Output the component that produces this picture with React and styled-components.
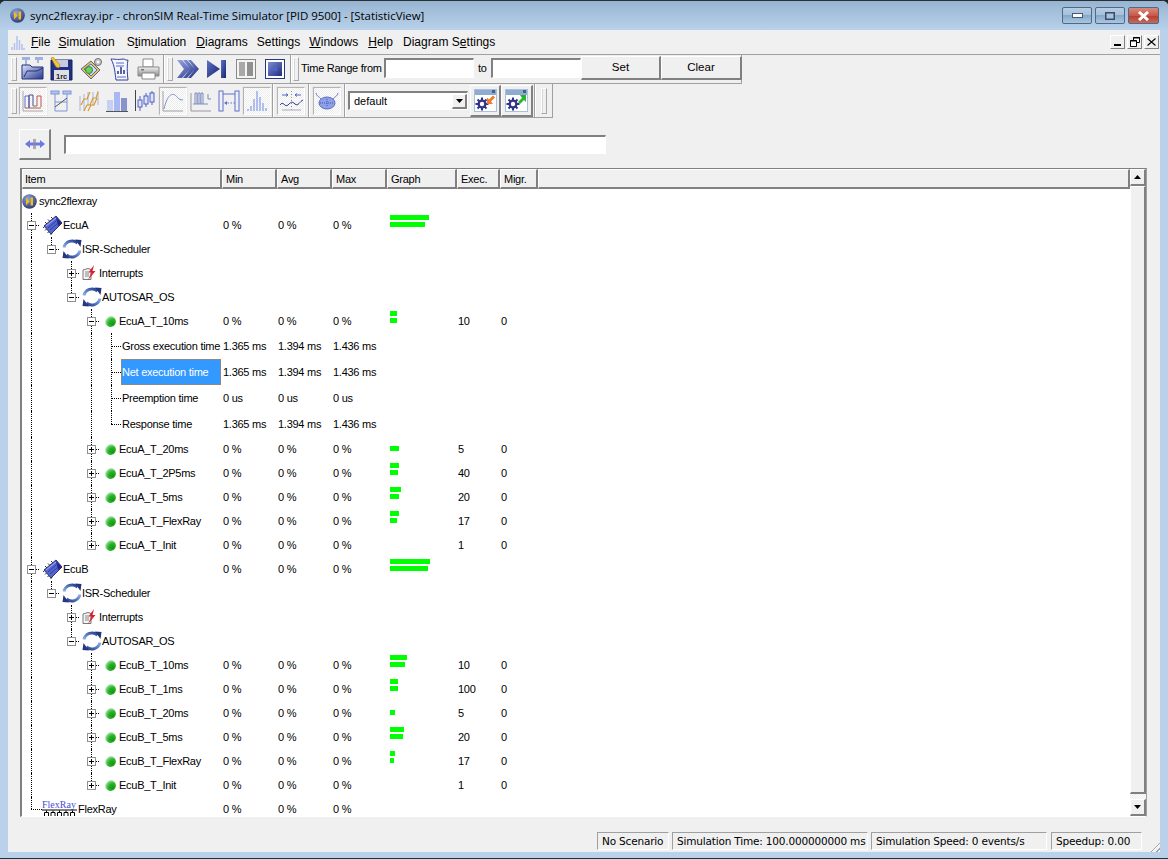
import React from 'react';
import styled, { createGlobalStyle, css } from 'styled-components';

const Global = createGlobalStyle`
  html, body { margin: 0; padding: 0; background: #20262b; overflow: hidden; }
  #root { width: 1168px; height: 859px; }
  * { box-sizing: border-box; }
`;

const UI = `"Liberation Sans", Arial, sans-serif`;
const raised = css`
  border-style: solid; border-width: 1px 2px 2px 1px;
  border-color: #fff #808080 #808080 #fff;
  background: #f0f0f0;
`;
const sunken = css`
  border-style: solid; border-width: 2px 1px 1px 2px;
  border-color: #808080 #fff #fff #808080;
  background: #fff;
`;
const dither = `repeating-conic-gradient(#fff 0 25%, #ececec 0 50%) 0 0/2px 2px`;

const Win = styled.div`
  width: 1168px; height: 859px; display: flex; flex-direction: column; overflow: hidden;
  background: #b9d1ea; border-top: 1px solid #2b2f33; border-bottom: 1px solid #0d3b44;
  border-radius: 6px 6px 0 0;
  font: 11px ${UI}; letter-spacing: -0.26px; color: #000;
`;
const TitleBar = styled.div`
  height: 29px; flex: none; display: flex; align-items: center; padding: 0 9px 0 10px;
  background: linear-gradient(#96b5d2, #b9d1ea);
`;
const TitleText = styled.div`
  margin-left: 5px; flex: 1; font: 11.5px "Open Sans", sans-serif; letter-spacing: -0.05px; color: #000; white-space: nowrap;
`;
const CapBtns = styled.div`display: flex; gap: 3px;`;
const CapBtn = styled.div`
  width: ${p => p.$w}px; height: 17px; border: 1px solid #4f6a87; border-radius: 2px;
  display: flex; align-items: center; justify-content: center;
  background: ${p => p.$close ? 'linear-gradient(#d98a7f 0,#c9584a 50%,#b73c2e 51%,#c46a5c 100%)' : 'linear-gradient(#b7cde2 0,#a5c0da 48%,#86a9ca 50%,#aac6e0 100%)'};
`;
const Client = styled.div`
  flex: 1; margin: 0 8px 6px 8px; background: #f0f0f0; display: flex; flex-direction: column; min-height: 0;
`;
const MenuBar = styled.div`
  height: 25px; flex: none; display: flex; align-items: center; border-bottom: 1px solid #a0a0a0; padding-left: 3px; padding-right: 1px;
`;
const MenuItems = styled.div`display: flex; flex: 1; margin-left: 6px;`;
const MenuItem = styled.span`margin-left: ${p => p.$ml}px; font-size: 12px; letter-spacing: 0.02px; white-space: nowrap;`;
const MdiBtns = styled.div`display: flex; gap: 2px;`;
const MdiBtn = styled.div`
  ${raised}; border-width: 1px; width: ${p => p.$w || 15}px; height: 14px; display: flex; align-items: center; justify-content: center;
`;
const Toolbar = styled.div`
  width: ${p => p.$w}px; height: ${p => p.$h}px; flex: none; display: flex; align-items: center;
  padding-left: 3px; border-bottom: 1px solid #a0a0a0; border-right: 1px solid #a0a0a0;
`;
const Gripper = styled.div`
  width: 6px; height: ${p => p.$h || 24}px; flex: none; margin-left: ${p => p.$ml || 0}px;
  border: 1px solid #a8a8a8; border-top-color: #fff; border-left-color: #fff; background: #f0f0f0;
  box-shadow: inset 1px 0 0 #d8d8d8;
`;
const Divider = styled.div`
  width: 2px; align-self: stretch; flex: none; margin-left: ${p => p.$ml || 0}px;
  border-left: 1px solid #a0a0a0; border-right: 1px solid #fff;
`;
const ToolBtn = styled.div`
  width: ${p => p.$w || 29}px; height: ${p => p.$bh || 24}px; flex: none; display: flex; align-items: center; justify-content: center;
  margin-left: ${p => p.$ml || 0}px;
  ${p => p.$pressed && css`
    background: ${dither}; border: 1px solid; border-color: #b4b4b4 #fff #fff #b4b4b4; outline: 1px solid #e8e8e8;
  `}
  ${p => p.$raised && css`${raised}`}
`;
const RangeLabel = styled.span`
  width: ${p => p.$w}px; margin: 0 0 3px ${p => p.$ml}px; flex: none; font-size: 11px; white-space: nowrap;
`;
const Field = styled.div`
  ${sunken}; width: ${p => p.$w}px; height: ${p => p.$h || 20}px; margin-left: ${p => p.$ml || 0}px; flex: none;
  ${p => p.$lift && `margin-bottom: ${p.$lift}px;`}
  ${p => p.$top && `margin-top: ${p.$top}px;`}
`;
const PushBtn = styled.div`
  ${raised}; width: ${p => p.$w}px; height: 24px; flex: none; margin: 0 0 3px ${p => p.$ml || 0}px;
  display: flex; align-items: center; justify-content: center; font-size: 11.5px; letter-spacing: 0;
`;
const Combo = styled.div`
  ${sunken}; width: 120px; height: 19px; flex: none; margin-left: 2px; display: flex; align-items: center; padding-left: 4px; justify-content: space-between; font-size: 11px; letter-spacing: 0;
`;
const ComboArrow = styled.div`
  ${raised}; width: 15px; height: 15px; display: flex; align-items: center; justify-content: center;
`;
const Quick = styled.div`
  height: 50px; flex: none; display: flex; align-items: flex-start; padding: 11px 0 0 11px;
`;
const QuickBtn = styled.div`
  ${raised}; width: 32px; height: 31px; flex: none; display: flex; align-items: center; justify-content: center;
`;
const TableFrame = styled.div`
  height: 649px; flex: none; margin: 0 13px 0 12px; display: flex;
  border-style: solid; border-width: 1px 1px 1px 2px; border-color: #808080 #a0a0a0 #fff #808080;
`;
const TableMain = styled.div`flex: 1; min-width: 0; display: flex; flex-direction: column; overflow: hidden; background: #fff;`;
const COLS = `198px 55px 55px 55px 70px 43px 40px 1fr`;
const HEAD_COLS = `200px 55px 55px 55px 70px 43px 38px 1fr`;
const HeaderRow = styled.div`display: grid; grid-template-columns: ${HEAD_COLS}; height: 20px; flex: none;`;
const HeadCell = styled.div`
  padding: 0 0 0 ${p => p.$pad}px; display: flex; align-items: center; font-size: 11px;
  background: #f0f0f0; border-style: solid; border-width: 1px 2px 2px 1px; border-color: #fff #808080 #808080 #fff;
`;
const Body = styled.div`flex: 1; overflow: hidden; min-height: 0;`;
const Row = styled.div`display: grid; grid-template-columns: ${COLS}; height: ${p => p.$h}px;`;
const ItemCell = styled.div`
  position: relative; display: flex; align-items: center; height: 100%; white-space: nowrap;
  padding-left: ${p => p.$pad}px;
`;
const VLine = styled.div`
  position: absolute; left: ${p => p.$x}px; top: 0; width: 1px;
  height: ${p => p.$half ? '50%' : '100%'};
  border-left: 1px dotted #000;
`;
const Expander = styled.div`
  position: relative; width: 9px; height: 9px; flex: none; background: #fff; border: 1px solid #909090;
  &::before { content: ''; position: absolute; left: 1px; right: 1px; top: 3px; height: 1px; background: #000; }
  ${p => p.$plus && css`&::after { content: ''; position: absolute; top: 1px; bottom: 1px; left: 3px; width: 1px; background: #000; }`}
`;
const HDash = styled.div`
  width: ${p => p.$w}px; height: 1px; flex: none; border-top: 1px dotted #000; margin-right: ${p => p.$mr || 0}px; position: relative;
`;
const NodeIcon = styled.div`
  position: relative; flex: none; display: flex; width: ${p => p.$w}px; margin-right: ${p => p.$mr || 0}px;
`;
const Label = styled.span`
  position: relative; font-size: 11px;
  ${p => p.$fill && css`
    flex: 1; height: 100%; display: flex; align-items: center; padding-left: 1px; margin-right: -1px;
  `}
  ${p => p.$sel && css`
    background: #3399ff; color: #fff; outline: 1px dotted #d97a1a; outline-offset: -1px;
  `}
`;
const ValCell = styled.div`display: flex; align-items: center; padding-left: 3px; font-size: 11px; white-space: nowrap;`;
const GraphCell = styled.div`display: flex; flex-direction: column; gap: 2px; padding: ${p => p.$single ? 9 : 2}px 0 0 5px;`;
const Bar = styled.div`width: ${p => p.$w}px; height: 5px; background: #00ff00;`;
const ScrollTrack = styled.div`
  width: 16px; flex: none; display: flex; flex-direction: column; background: ${dither};
`;
const ScrollBtn = styled.div`
  ${raised}; height: 17px; flex: none; display: flex; align-items: center; justify-content: center;
`;
const ScrollThumb = styled.div`${raised}; height: 608px; flex: none;`;
const ScrollRest = styled.div`flex: 1;`;
const StatusBar = styled.div`
  flex: 1; display: flex; align-items: flex-end; padding: 0 18px 2px 589px; gap: 3px; position: relative;
`;
const StatusBox = styled.div`
  width: ${p => p.$w}px; height: 18px; flex: none; margin-left: ${p => p.$ml || 0}px;
  border: 1px solid; border-color: #a0a0a0 #fff #fff #a0a0a0; display: flex; align-items: center; padding-left: 4px;
  font: 10.5px "DejaVu Sans", sans-serif; letter-spacing: -0.18px; white-space: nowrap;
`;
const Grip = styled.div`
  position: absolute; right: 0; bottom: 0; width: 12px; height: 12px;
  background: repeating-linear-gradient(135deg, transparent 0 2px, #a0a0a0 2px 3px, #fff 3px 4px);
  clip-path: polygon(100% 0, 100% 100%, 0 100%);
`;

const Svg = ({ w = 24, h = 24, vb, children }) => (
  <svg width={w} height={h} viewBox={vb || `0 0 ${w} ${h}`} style={{ display: 'block' }}>{children}</svg>
);

/* ---------- logos & tree icons ---------- */
const Logo = ({ id, s = 15 }) => (
  <Svg w={s} h={s} vb="0 0 15 15">
    <defs><radialGradient id={id} cx="40%" cy="30%" r="75%"><stop offset="0" stopColor="#8ea6d8"/><stop offset="1" stopColor="#27366f"/></radialGradient></defs>
    <circle cx="7.5" cy="7.5" r="7.3" fill={`url(#${id})`}/>
    <path d="M4 3.5l3.6 4L4 11.5z" fill="#f5b81f"/>
    <rect x="8.6" y="3.5" width="2.4" height="8" fill="#f5b81f"/>
  </Svg>
);
const Chip = () => (
  <Svg w={21} h={21}>
    <g stroke="#333" strokeWidth="1">
      <path d="M3 11l-2 2M5 13.500l-2 2M7.500 16l-2 2M10 18.500l-1.500 1.500M5 9L3 7M8 6.500L6 4.500M11 4L9 2"/>
    </g>
    <path d="M2 11L14 1l6 7-11 11z" fill="#5565d0" stroke="#2a3274"/>
    <path d="M4 11L14 3" fill="none" stroke="#a3b0f0"/>
    <path d="M14 2l6 6-4 3z" fill="#1d2a8a"/>
    <path d="M6 13l8-7M8 15l8-7" stroke="#3040a0"/>
  </Svg>
);
const Sync = ({ id }) => (
  <Svg w={20} h={20}>
    <defs>
      <linearGradient id={`${id}a`} x1="0" y1="1" x2="1" y2="0"><stop offset="0" stopColor="#8fb4ee"/><stop offset="1" stopColor="#24408e"/></linearGradient>
      <linearGradient id={`${id}b`} x1="1" y1="0" x2="0" y2="1"><stop offset="0" stopColor="#8fb4ee"/><stop offset="1" stopColor="#24408e"/></linearGradient>
    </defs>
    <path d="M2 8.500A8.300 8.300 0 0 1 15.500 4" fill="none" stroke={`url(#${id}a)`} strokeWidth="3"/>
    <path d="M13 .5l6.500.5-1 7z" fill="#23367f"/>
    <path d="M18 11.500A8.300 8.300 0 0 1 4.500 16" fill="none" stroke={`url(#${id}b)`} strokeWidth="3"/>
    <path d="M7 19.500l-6.500-.5 1-7z" fill="#23367f"/>
  </Svg>
);
const Interrupt = () => (
  <Svg w={14} h={16}>
    <path d="M1 5l5-1.500 3 1v10H1z" fill="#f4f4f4" stroke="#777"/>
    <path d="M3 7h4M3 9h4M3 11h4" stroke="#888"/>
    <path d="M12 0L6.500 7.500h3L6 15l7.500-9h-3z" fill="#d8202a"/>
  </Svg>
);
const Ball = ({ id }) => (
  <Svg w={11} h={11}>
    <defs><radialGradient id={id} cx="70%" cy="70%" r="78%"><stop offset="0" stopColor="#119611"/><stop offset=".5" stopColor="#2cb42c"/><stop offset=".8" stopColor="#7ed67e"/><stop offset="1" stopColor="#f4fff4"/></radialGradient></defs>
    <circle cx="5.500" cy="5.500" r="5.400" fill={`url(#${id})`}/>
  </Svg>
);
const FlexBus = () => (
  <Svg w={35} h={23} vb="0 -2.500 35 23">
    <text x="0" y="7" fontFamily="Liberation Serif, serif" fontSize="10" letterSpacing="0" fill="#4a4ad8">FlexRay</text>
    <path d="M0 9.500h35" stroke="#000"/>
    <path d="M2.500 17v-5h4v5M9 17v-5h4v5M15.500 17v-5h4v5M22 17v-5h4v5M28.500 17v-5h4v5M4.500 10v2M11 10v2M17.500 10v2M24 10v2M30.500 10v2" fill="none" stroke="#000"/>
  </Svg>
);
const Histo = () => (
  <Svg w={14} h={15}>
    <path d="M1 15v-3M3.500 15V8M6 15V1M8.500 15V5M11 15v-6M13 15v-2" stroke="#b4c2ee" strokeWidth="1.500"/>
  </Svg>
);

/* ---------- toolbar icons ---------- */
const IOpen = () => (
  <Svg w={24} h={24}>
    <defs><linearGradient id="ob" x1="0" y1="0" x2="1" y2="1"><stop offset="0" stopColor="#dfe6fa"/><stop offset="1" stopColor="#25358c"/></linearGradient></defs>
    <rect x="1" y="0" width="8" height="3" fill="#9db1e6"/><rect x="14" y="0" width="8" height="3" fill="#9db1e6"/>
    <path d="M5 3v5M17 3v3" stroke="#6678b8"/>
    <path d="M1 22V8h8l2 2h11v12z" fill="url(#ob)" stroke="#22307e"/>
    <path d="M3 20l3-6h10l6-3" fill="none" stroke="#22307e"/>
  </Svg>
);
const ISave = () => (
  <Svg w={23} h={24}>
    <path d="M1 3h21v20H1z" fill="#1f3085" stroke="#16205f"/>
    <rect x="6" y="3" width="12" height="7" fill="#c6cbe0"/>
    <rect x="4" y="13" width="15" height="10" fill="#dfdfe6"/>
    <text x="6" y="21.500" fontFamily="Liberation Sans" fontWeight="700" fontSize="7.500" letterSpacing="0" fill="#222">1rc</text>
    <path d="M1 1l2-1 7 8-1 3-3-1z" fill="#f2c53a" stroke="#a87a12" strokeWidth=".6"/>
  </Svg>
);
const IGear = () => (
  <Svg w={24} h={24}>
    <path d="M2 12L12 4l9 9-9 9z" fill="#e8c44c" stroke="#5a64a8"/>
    <path d="M5 12l7-5 6 6-6 6z" fill="#cfd8f5" stroke="#5668c0"/>
    <circle cx="10" cy="13" r="3.500" fill="#6ed25a" stroke="#3a8a30"/>
    <circle cx="19" cy="5" r="3.500" fill="#c8c8c8" stroke="#707070"/>
    <circle cx="19" cy="5" r="1.200" fill="#fff"/>
  </Svg>
);
const IDoc = () => (
  <Svg w={20} h={23}>
    <path d="M1 1c4 0 6 1 12 0 2 0 4 2 5 1-1 4-1 12 0 20H6c-1-6-1-14-5-21z" fill="#f4f6ff" stroke="#2f3f9c"/>
    <path d="M6 5h8M6 8h8M7 19h9" stroke="#5a6ac4"/>
    <path d="M8 16v-3M11 16V9M14 16v-4" stroke="#24308a" strokeWidth="1.500"/>
  </Svg>
);
const IPrint = () => (
  <Svg w={23} h={22}>
    <defs><linearGradient id="pr" x1="0" y1="0" x2="0" y2="1"><stop offset="0" stopColor="#f2f2f2"/><stop offset="1" stopColor="#8a8a8a"/></linearGradient></defs>
    <path d="M6 1h10v8H6z" fill="#fff" stroke="#888"/>
    <path d="M1 9h21v9H1z" fill="url(#pr)" stroke="#8a8a8a"/>
    <path d="M5 15h13v6H5z" fill="#fff" stroke="#888"/>
    <rect x="4" y="11" width="3" height="1.500" fill="#777"/>
  </Svg>
);
const Grad = ({ id, a = '#9aa8e4', b = '#1f2d80' }) => (
  <defs><linearGradient id={id} x1="0" y1="0" x2="1" y2="1"><stop offset="0" stopColor={a}/><stop offset="1" stopColor={b}/></linearGradient></defs>
);
const IFF = () => (
  <Svg w={22} h={20}>
    <Grad id="ff"/>
    <path d="M0 1h5l8 9-8 9H0l7-9zM6 1h4l8 9-8 9H6l7-9zM11 1h3l8 9-8 9h-3l7-9z" fill="url(#ff)"/>
  </Svg>
);
const IStep = () => (
  <Svg w={20} h={20}>
    <Grad id="st" a="#5f72c8" b="#16226e"/>
    <path d="M0 1l13 9-13 9z" fill="url(#st)"/>
    <rect x="14" y="1" width="5" height="18" fill="url(#st)"/>
  </Svg>
);
const IPause = () => (
  <Svg w={20} h={20}>
    <rect x=".5" y=".5" width="19" height="19" fill="#f4f4f4" stroke="#888"/>
    <rect x="3" y="3" width="6" height="14" fill="#a8a8a8"/>
    <rect x="11" y="3" width="6" height="14" fill="#909090"/>
  </Svg>
);
const IStop = () => (
  <Svg w={20} h={20}>
    <Grad id="sp" a="#7d8dd8" b="#1f2d80"/>
    <rect x=".5" y=".5" width="19" height="19" fill="#fff" stroke="#2a3580"/>
    <rect x="3" y="3" width="14" height="14" fill="url(#sp)"/>
    <rect x="8" y="8" width="4" height="4" fill="#5464b8"/>
  </Svg>
);
const LB = '#7f93d8';
const IPulse = () => (
  <Svg w={22} h={22}>
    <path d="M1 1v20h20" fill="none" stroke="#a8a8a8"/>
    <path d="M3 18V6h4v12" fill="none" stroke="#5a6cc8"/>
    <path d="M7 18V5h4v11" fill="none" stroke="#444a98"/>
    <path d="M11 16h4" stroke="#3a9a3a"/>
    <path d="M15 16V6h4v11" fill="none" stroke="#c05050"/>
    <path d="M3 18h16" stroke="#c05050"/>
  </Svg>
);
const IGantt = () => (
  <Svg w={22} h={22}>
    <rect x="1" y="1" width="8" height="3" fill="#b4c4ee" stroke={LB}/><rect x="13" y="1" width="8" height="3" fill="#b4c4ee" stroke={LB}/>
    <path d="M5 4v17M17 4v17M5 12h12M5 21h12" stroke={LB} fill="none"/>
    <path d="M5 17L17 8" stroke="#555"/>
  </Svg>
);
const IStair = () => (
  <Svg w={21} h={22}>
    <path d="M1 6v15M5 4v17M9 2v14M14 2v14M19 1v14" stroke="#a8b4e0" fill="none"/>
    <path d="M2 15l3-6h3l3-7M5 21l3-6h3l3-7h3l2-6M9 21l3-6h3l3-7" stroke="#d89a2a" fill="none" strokeWidth="1.200"/>
  </Svg>
);
const IBars = () => (
  <Svg w={22} h={22}>
    <rect x="1" y="10" width="6" height="11" fill="#c6d0f2"/>
    <rect x="8" y="2" width="6" height="19" fill="#a8b8f4"/>
    <rect x="15" y="8" width="6" height="13" fill="#8594cc"/>
    <path d="M0 21.500h22" stroke="#555"/>
  </Svg>
);
const IBox = () => (
  <Svg w={21} h={22}>
    <path d="M.5 0v21" stroke="#444"/>
    <path d="M5 6v15M11 3v14M17 1v14" stroke="#5060c0"/>
    <rect x="3" y="10" width="4" height="7" fill="#dde3fa" stroke="#5060c0"/>
    <rect x="9" y="6" width="4" height="8" fill="#dde3fa" stroke="#5060c0"/>
    <rect x="15" y="3" width="4" height="9" fill="#dde3fa" stroke="#5060c0"/>
  </Svg>
);
const ICurve = () => (
  <Svg w={22} h={22}>
    <path d="M1 1v20h20" fill="none" stroke="#a0a0a0"/>
    <path d="M2 19C5 6 9 3 13 5c2 1 3 5 8 5" fill="none" stroke="#7c90cc"/>
  </Svg>
);
const ITiming = () => (
  <Svg w={22} h={22}>
    <path d="M1 3v18h20" fill="none" stroke="#999"/>
    <path d="M5 14V3h2v11M8 14V3h2v11M11 14V3h2v11M3 14h15M18 9V4M18 9h3" fill="none" stroke="#7d8bc0"/>
  </Svg>
);
const ISeq = () => (
  <Svg w={22} h={22}>
    <rect x="1" y="1" width="4" height="20" fill="none" stroke="#5c70d0"/>
    <rect x="17" y="1" width="4" height="20" fill="none" stroke="#5c70d0"/>
    <path d="M5 4h12" stroke="#5c70d0"/>
    <path d="M17 13H8" stroke="#5c70d0" strokeDasharray="1.500 1.500"/>
    <path d="M6 13l3-2v4z" fill="#5c70d0"/>
  </Svg>
);
const IHist = () => (
  <Svg w={23} h={22}>
    <path d="M2 21v-2M5 21v-5M8 21V9M11 21V1M14 21V7M17 21v-8M20 21v-3" stroke="#b0bef0" strokeWidth="2"/>
  </Svg>
);
const IWave = () => (
  <Svg w={23} h={22}>
    <path d="M2 5h6M8 5L6 3.500M8 5L6 6.500M15 5h6M15 5l2-1.500M15 5l2 1.500" fill="none" stroke="#5566bb"/>
    <path d="M0 15c3-5 5 3 8 0s4-4 7-1 5-3 8-4" fill="none" stroke="#2a3a9a"/>
    <path d="M11.500 1v20" stroke="#8a8a8a" strokeDasharray="1 2"/>
    <path d="M2 20h19" stroke="#aab" />
  </Svg>
);
const IEye = () => (
  <Svg w={24} h={22}>
    <path d="M1 3c1 4 3 3 5 6M23 3c-1 4-3 3-5 6" fill="none" stroke="#6878c4"/>
    <ellipse cx="12" cy="13" rx="8" ry="6" fill="#8ea0e8" stroke="#5b6cc0"/>
    <path d="M5 13h14M12 9v8" stroke="#4456a8" strokeDasharray="1 1"/>
  </Svg>
);
const ICfg = ({ color, d }) => (
  <Svg w={23} h={23}>
    <rect x=".5" y=".5" width="22" height="22" fill="#fff" stroke="#a9c0dc"/>
    <rect x="1" y="1" width="21" height="5" fill="#8facd0"/>
    <rect x="18" y="1" width="3" height="3" fill="#4a5e90"/>
    <path d="M8 8.500v13M1.500 15h13M3.500 10.500l9 9M12.500 10.500l-9 9" stroke="#33338c" strokeWidth="2"/>
    <circle cx="8" cy="15" r="4.500" fill="#33338c"/>
    <circle cx="8" cy="15" r="2.200" fill="#fff"/>
    <path d={d} fill={color}/>
  </Svg>
);

/* ---------- tree data ---------- */
const Z = ['0 %', '0 %', '0 %'];
const T = ['1.365 ms', '1.394 ms', '1.436 ms'];
const raw = [
  { l: 0, i: 'logo', n: 'sync2flexray' },
  { l: 1, i: 'chip', n: 'EcuA', v: Z, b: [39, 35], m: 1 },
  { l: 2, i: 'sync', n: 'ISR-Scheduler', m: 1 },
  { l: 3, i: 'int', n: 'Interrupts' },
  { l: 3, i: 'sync', n: 'AUTOSAR_OS', m: 1 },
  { l: 4, i: 'ball', n: 'EcuA_T_10ms', v: Z, b: [7, 7], e: '10', g: '0', m: 1 },
  { l: 5, n: 'Gross execution time', v: T, h: 26 },
  { l: 5, n: 'Net execution time', v: T, h: 26, sel: 1 },
  { l: 5, n: 'Preemption time', v: ['0 us', '0 us', '0 us'], h: 26 },
  { l: 5, n: 'Response time', v: T, h: 26 },
  { l: 4, i: 'ball', n: 'EcuA_T_20ms', v: Z, b: [9], e: '5', g: '0' },
  { l: 4, i: 'ball', n: 'EcuA_T_2P5ms', v: Z, b: [9, 8], e: '40', g: '0' },
  { l: 4, i: 'ball', n: 'EcuA_T_5ms', v: Z, b: [11, 9], e: '20', g: '0' },
  { l: 4, i: 'ball', n: 'EcuA_T_FlexRay', v: Z, b: [9, 7], e: '17', g: '0' },
  { l: 4, i: 'ball', n: 'EcuA_T_Init', v: Z, e: '1', g: '0' },
  { l: 1, i: 'chip', n: 'EcuB', v: Z, b: [40, 38], m: 1 },
  { l: 2, i: 'sync', n: 'ISR-Scheduler', m: 1 },
  { l: 3, i: 'int', n: 'Interrupts' },
  { l: 3, i: 'sync', n: 'AUTOSAR_OS', m: 1 },
  { l: 4, i: 'ball', n: 'EcuB_T_10ms', v: Z, b: [17, 15], e: '10', g: '0' },
  { l: 4, i: 'ball', n: 'EcuB_T_1ms', v: Z, b: [8, 8], e: '100', g: '0' },
  { l: 4, i: 'ball', n: 'EcuB_T_20ms', v: Z, b: [5], e: '5', g: '0' },
  { l: 4, i: 'ball', n: 'EcuB_T_5ms', v: Z, b: [14, 13], e: '20', g: '0' },
  { l: 4, i: 'ball', n: 'EcuB_T_FlexRay', v: Z, b: [5, 4], e: '17', g: '0' },
  { l: 4, i: 'ball', n: 'EcuB_T_Init', v: Z, e: '1', g: '0' },
  { l: 1, i: 'bus', n: 'FlexRay', v: Z },
];
const continues = (idx, level) => {
  for (let j = idx + 1; j < raw.length; j++) {
    if (raw[j].l < level) return false;
    if (raw[j].l === level) return true;
  }
  return false;
};
const gx = l => 9 + 20 * (l - 1);

const NodeGlyph = ({ r, idx }) => {
  if (r.i === 'logo') return <NodeIcon $w={15} $mr={2}><Logo id="lg2" /></NodeIcon>;
  if (r.i === 'chip') return <NodeIcon $w={21}><Chip /></NodeIcon>;
  if (r.i === 'sync') return <NodeIcon $w={20}><Sync id={`s${idx}`} /></NodeIcon>;
  if (r.i === 'int') return <NodeIcon $w={14} $mr={3}><Interrupt /></NodeIcon>;
  if (r.i === 'ball') return <NodeIcon $w={11} $mr={3}><Ball id={`b${idx}`} /></NodeIcon>;
  if (r.i === 'bus') return <NodeIcon $w={35} $mr={1}><FlexBus /></NodeIcon>;
  return null;
};

const padFor = r => {
  if (r.l === 0) return 0;
  if (r.l === 5) return gx(5);
  return 5 + 20 * (r.l - 1);
};

const TreeRow = ({ r, idx }) => {
  const guides = [];
  for (let l = 1; l < r.l; l++) if (continues(idx, l)) guides.push(<VLine key={l} $x={gx(l)} />);
  if (r.l > 0) guides.push(<VLine key="own" $x={gx(r.l)} $half={!continues(idx, r.l)} />);
  let lead = null;
  if (r.l === 5) lead = <HDash $w={10} />;
  else if (r.i === 'bus') lead = <HDash $w={11} />;
  else if (r.l > 0) lead = (<><Expander $plus={!r.m} /><HDash $w={3} $mr={r.l === 4 ? 6 : 3} /></>);
  const pad = r.i === 'bus' ? gx(1) : padFor(r);
  const vals = r.v || ['', '', ''];
  return (
    <Row $h={r.h || 24}>
      <ItemCell $pad={pad}>
        {guides}
        {lead}
        <NodeGlyph r={r} idx={idx} />
        <Label $fill={r.l === 5} $sel={r.sel}>{r.n}</Label>
      </ItemCell>
      {vals.map((v, k) => <ValCell key={k}>{v}</ValCell>)}
      <GraphCell $single={r.b && r.b.length === 1}>
        {(r.b || []).map((w, k) => <Bar key={k} $w={w} />)}
      </GraphCell>
      <ValCell>{r.e}</ValCell>
      <ValCell>{r.g}</ValCell>
      <div />
    </Row>
  );
};

const Tri = ({ down }) => (
  <Svg w={7} h={4}><path d={down ? 'M0 0h7L3.500 4z' : 'M0 4h7L3.500 0z'} fill="#000" /></Svg>
);

export default function App() {
  return (
    <Win>
      <Global />
      <TitleBar>
        <Logo id="lg1" />
        <TitleText>sync2flexray.ipr - chronSIM Real-Time Simulator [PID 9500] - [StatisticView]</TitleText>
        <CapBtns>
          <CapBtn $w={30}><Svg w={11} h={5}><rect x=".5" y=".5" width="10" height="4" fill="#fff" stroke="#455a78" /></Svg></CapBtn>
          <CapBtn $w={30}><Svg w={10} h={8}><rect x=".75" y=".75" width="8.500" height="6.500" fill="#a9c3dc" stroke="#3a4c66" strokeWidth="1.500" /></Svg></CapBtn>
          <CapBtn $w={31} $close><Svg w={13} h={10}><path d="M2 1l9 8M11 1L2 9" stroke="#fff" strokeWidth="3" /></Svg></CapBtn>
        </CapBtns>
      </TitleBar>
      <Client>
        <MenuBar>
          <Histo />
          <MenuItems>
            <MenuItem $ml={0}><u>F</u>ile</MenuItem>
            <MenuItem $ml={8}><u>S</u>imulation</MenuItem>
            <MenuItem $ml={12}>S<u>t</u>imulation</MenuItem>
            <MenuItem $ml={10}><u>D</u>iagrams</MenuItem>
            <MenuItem $ml={9}>Settings</MenuItem>
            <MenuItem $ml={9}><u>W</u>indows</MenuItem>
            <MenuItem $ml={10}><u>H</u>elp</MenuItem>
            <MenuItem $ml={10}>Diagram S<u>e</u>ttings</MenuItem>
          </MenuItems>
          <MdiBtns>
            <MdiBtn><Svg w={7} h={7}><rect x="0" y="5" width="7" height="2" fill="#000" /></Svg></MdiBtn>
            <MdiBtn><Svg w={10} h={10}><path d="M3.500 3V.5h6v5H7M.5 3.500h6v6h-6z" fill="#fff" stroke="#000" /><path d="M3 1h7M0 4h7" stroke="#000" /></Svg></MdiBtn>
            <MdiBtn><Svg w={9} h={8}><path d="M.5.500l8 7M8.500.500l-8 7" stroke="#000" strokeWidth="1.100" /></Svg></MdiBtn>
          </MdiBtns>
        </MenuBar>

        <Toolbar $w={734} $h={29}>
          <Gripper />
          <ToolBtn $w={29} $ml={1}><IOpen /></ToolBtn>
          <ToolBtn><ISave /></ToolBtn>
          <ToolBtn><IGear /></ToolBtn>
          <ToolBtn><IDoc /></ToolBtn>
          <ToolBtn><IPrint /></ToolBtn>
          <Divider />
          <Gripper $ml={2} />
          <ToolBtn><IFF /></ToolBtn>
          <ToolBtn><IStep /></ToolBtn>
          <ToolBtn><IPause /></ToolBtn>
          <ToolBtn><IStop /></ToolBtn>
          <Divider $ml={1} />
          <Gripper $ml={1} />
          <RangeLabel $w={81} $ml={2}>Time Range from</RangeLabel>
          <Field $w={90} $ml={2} $lift={3} />
          <RangeLabel $w={9} $ml={4}>to</RangeLabel>
          <Field $w={90} $ml={4} $lift={3} />
          <PushBtn $w={80}>Set</PushBtn>
          <PushBtn $w={81}>Clear</PushBtn>
        </Toolbar>
        <Toolbar $w={545} $h={34}>
          <Gripper $h={26} />
          <ToolBtn $w={28} $bh={28} $ml={2} $pressed><IPulse /></ToolBtn>
          <ToolBtn $w={28}><IGantt /></ToolBtn>
          <ToolBtn $w={28}><IStair /></ToolBtn>
          <ToolBtn $w={28}><IBars /></ToolBtn>
          <ToolBtn $w={28}><IBox /></ToolBtn>
          <ToolBtn $w={28} $bh={28} $pressed><ICurve /></ToolBtn>
          <ToolBtn $w={28}><ITiming /></ToolBtn>
          <ToolBtn $w={28}><ISeq /></ToolBtn>
          <ToolBtn $w={28} $bh={28} $pressed><IHist /></ToolBtn>
          <Divider $ml={1} />
          <ToolBtn $w={28} $bh={28} $ml={3} $pressed><IWave /></ToolBtn>
          <Divider $ml={3} />
          <ToolBtn $w={28} $bh={28} $ml={3} $pressed><IEye /></ToolBtn>
          <Divider $ml={3} />
          <Combo>default<ComboArrow><Tri down /></ComboArrow></Combo>
          <ToolBtn $w={31} $bh={32} $ml={2} $raised><ICfg color="#f07a28" d="M13 15V8.500l2 2 4-4 2 2-4 4 2 2.500z" /></ToolBtn>
          <ToolBtn $w={32} $bh={32} $raised><ICfg color="#2ab52a" d="M21 6v7l-2-2-4 4-2-2 4-4-2-3z" /></ToolBtn>
          <Divider $ml={1} />
          <Gripper $ml={5} $h={26} />
        </Toolbar>

        <Quick>
          <QuickBtn>
            <Svg w={20} h={12}>
              <path d="M0 6l5-4v2.500h10V2l5 4-5 4V7.500H5V10z" fill="#6a78e8" />
              <path d="M8 1h3v10H8z" fill="#8a8aa0" opacity=".7" />
            </Svg>
          </QuickBtn>
          <Field $w={542} $h={19} $ml={13} $top={6} />
        </Quick>

        <TableFrame>
          <TableMain>
            <HeaderRow>
              {['Item', 'Min', 'Avg', 'Max', 'Graph', 'Exec.', 'Migr.', ''].map((h, i) => <HeadCell key={i} $pad={i === 0 ? 2 : 3}>{h}</HeadCell>)}
            </HeaderRow>
            <Body>
              {raw.map((r, i) => <TreeRow key={i} r={r} idx={i} />)}
            </Body>
          </TableMain>
          <ScrollTrack>
            <ScrollBtn><Tri /></ScrollBtn>
            <ScrollThumb />
            <ScrollRest />
            <ScrollBtn><Tri down /></ScrollBtn>
          </ScrollTrack>
        </TableFrame>

        <StatusBar>
          <StatusBox $w={72}>No Scenario</StatusBox>
          <StatusBox $w={196}>Simulation Time: 100.000000000 ms</StatusBox>
          <StatusBox $w={176}>Simulation Speed: 0 events/s</StatusBox>
          <StatusBox $w={91} $ml={1}>Speedup: 0.00</StatusBox>
          <Grip />
        </StatusBar>
      </Client>
    </Win>
  );
}
